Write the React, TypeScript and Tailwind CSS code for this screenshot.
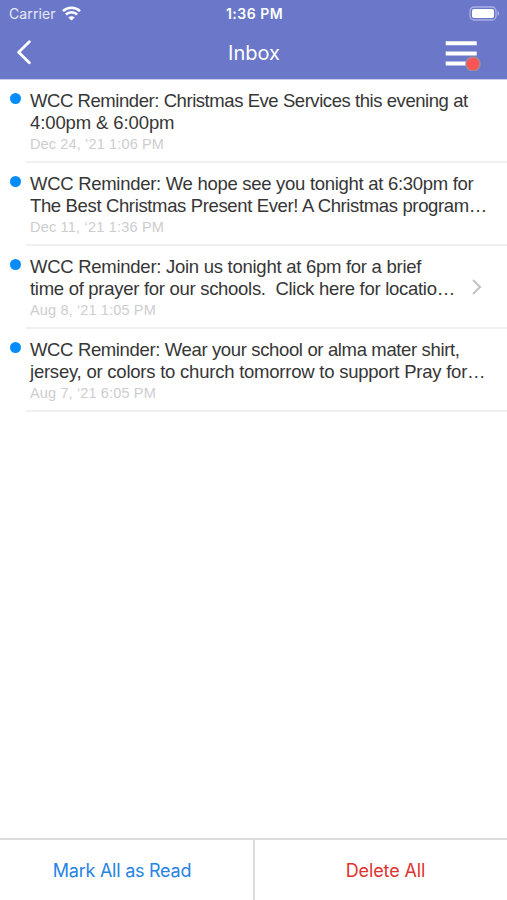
import React from "react";

type Line = { text: string; spacing: string };
type Message = { id: number; lines: Line[]; date: string; dateSpacing: string; link?: boolean };

const messages: Message[] = [
  {
    id: 1,
    lines: [
      { text: "WCC Reminder: Christmas Eve Services this evening at", spacing: "tracking-[-0.44px]" },
      { text: "4:00pm & 6:00pm", spacing: "tracking-[-0.11px]" },
    ],
    date: "Dec 24, ’21 1:06 PM",
    dateSpacing: "tracking-[0.14px]",
  },
  {
    id: 2,
    lines: [
      { text: "WCC Reminder: We hope see you tonight at 6:30pm for", spacing: "tracking-[-0.29px]" },
      { text: "The Best Christmas Present Ever! A Christmas program…", spacing: "tracking-[-0.36px]" },
    ],
    date: "Dec 11, ‘21 1:36 PM",
    dateSpacing: "tracking-[0.2px]",
  },
  {
    id: 3,
    lines: [
      { text: "WCC Reminder: Join us tonight at 6pm for a brief", spacing: "tracking-[-0.27px]" },
      { text: "time of prayer for our schools.  Click here for locatio…", spacing: "tracking-[-0.29px]" },
    ],
    date: "Aug 8, ‘21 1:05 PM",
    dateSpacing: "tracking-[0.14px]",
    link: true,
  },
  {
    id: 4,
    lines: [
      { text: "WCC Reminder: Wear your school or alma mater shirt,", spacing: "tracking-[-0.36px]" },
      { text: "jersey, or colors to church tomorrow to support Pray for…", spacing: "tracking-[-0.23px]" },
    ],
    date: "Aug 7, ‘21 6:05 PM",
    dateSpacing: "tracking-[0.14px]",
  },
];

function StatusBar() {
  return (
    <div className="grid h-[27px] grid-cols-3 items-center pl-[9px] pr-[7px] text-[14px] leading-[27px]">
      <div className="flex items-center gap-[6px]">
        <span className="tracking-[0.1px] text-[#e6e8f8]">Carrier</span>
        <svg width="19" height="15" viewBox="0 0 19 15" fill="none" stroke="#fff" strokeWidth="2.5">
          <path d="M1 5.2C5.7.7 13.3.7 18 5.2" />
          <path d="M3.900 8.500c3.100-2.900 8.100-2.900 11.200 0" />
          <path d="M9.500 14.500 6.300 11.400c1.800-1.500 4.600-1.500 6.400 0Z" fill="#fff" stroke="none" />
        </svg>
      </div>
      <span className="text-center text-[14px] font-semibold tracking-[0.500px]">1:36 PM</span>
      <svg className="justify-self-end" width="32" height="16" viewBox="0 0 32 16">
        <rect x="2" y="1" width="26" height="13" rx="4" fill="none" stroke="#a9b0e2" strokeWidth="1.300" />
        <rect x="4" y="3" width="22" height="9" rx="2" fill="#fff" />
        <path d="M29.500 5.100c2.200.7 2.200 4.100 0 4.800Z" fill="#a9b0e2" />
      </svg>
    </div>
  );
}

function NavBar() {
  return (
    <div className="grid h-[52px] grid-cols-3 items-center pl-[16px] pr-[26px]">
      <svg width="18" height="26" viewBox="0 0 18 26" fill="none" stroke="#fff" strokeWidth="2.800" strokeLinecap="round" strokeLinejoin="round">
        <path d="M13.300 1.800 2.700 12.200 13.300 22.800" />
      </svg>
      <h1 className="pl-[11px] text-center text-[20px] leading-[26px]">Inbox</h1>
      <svg className="justify-self-end" width="36" height="36" viewBox="0 0 36 36">
        <path d="M.7 8.200h31M.7 18.400h31M.7 28.600h31" stroke="#fff" strokeWidth="4" />
        <circle cx="28" cy="29" r="7" fill="#fb5455" stroke="#a08c96" strokeWidth="1.600" />
      </svg>
    </div>
  );
}

function Row({ message }: { message: Message }) {
  return (
    <li className="flex h-[83px] pl-[10px]">
      <span className="mt-[13px] size-[11px] shrink-0 rounded-full bg-[#058cfb]" />
      <div className="ml-[5px] flex grow border-b-2 border-[#f0f0f1] pl-[4px] pt-[9.500px]">
        <div className="grow">
          {message.lines.map((line) => (
            <p key={line.text} className={`whitespace-pre text-[18.500px] leading-[22px] text-[#363636] ${line.spacing}`}>
              {line.text}
            </p>
          ))}
          <p className={`whitespace-pre text-[14.500px] leading-[20px] text-[#cdcdcf] ${message.dateSpacing}`}>{message.date}</p>
        </div>
        {message.link && (
          <svg className="mr-[24px] mt-[22px]" width="12" height="18" viewBox="0 0 12 18" fill="none" stroke="#c3c3c5" strokeWidth="2.100">
            <path d="m2 2 7 7-7 7" />
          </svg>
        )}
      </div>
    </li>
  );
}

export default function App() {
  return (
    <div className="flex h-[900px] w-[507px] flex-col overflow-hidden bg-white font-['Liberation_Sans',Arial,sans-serif]">
      <header className="h-[80px] shrink-0 border-b border-[#c9cdeb] bg-[#6b78c9] font-[Inter,sans-serif] text-white">
        <StatusBar />
        <NavBar />
      </header>
      <ul className="grow">
        {messages.map((message) => (
          <Row key={message.id} message={message} />
        ))}
      </ul>
      <footer className="flex h-[62px] shrink-0 border-t-2 border-[#dcdcdc] font-[Inter,sans-serif] text-[18px]">
        <button className="w-[255px] border-r-2 border-[#dcdcdc] pr-[9px] tracking-[-0.25px] text-[#2583e2]">Mark All as Read</button>
        <button className="grow pl-[9px] tracking-[-0.1px] text-[#e0322e]">Delete All</button>
      </footer>
    </div>
  );
}
